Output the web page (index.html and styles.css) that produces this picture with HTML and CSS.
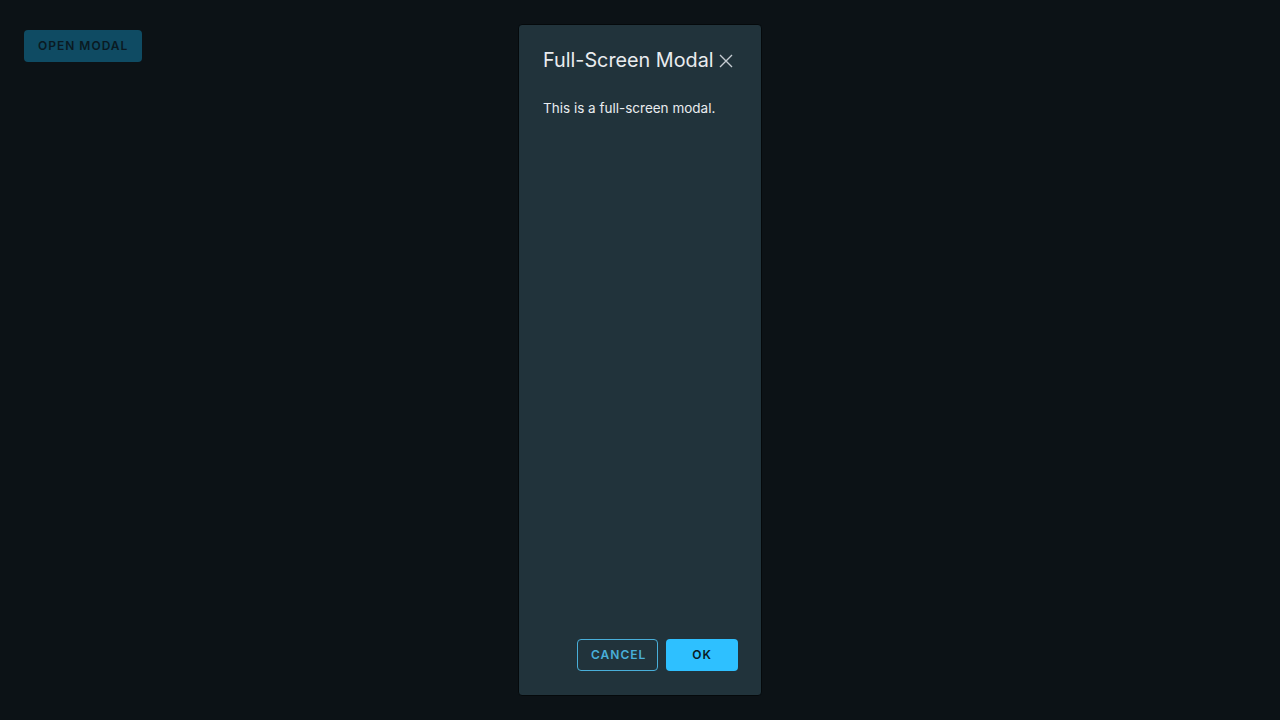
FILE: index.html
```html
<!DOCTYPE html>
<html lang="en">
<head>
<meta charset="utf-8">
<title>Full-Screen Modal</title>
<link rel="stylesheet" href="styles.css">
</head>
<body>
<main class="page">
  <button class="btn btn-open">Open Modal</button>
</main>
<div class="backdrop">
  <section class="modal" role="dialog" aria-labelledby="modal-title">
    <header class="modal-header">
      <h2 class="modal-title" id="modal-title">Full-Screen Modal</h2>
      <button class="modal-close" aria-label="Close">
        <svg viewBox="0 0 16 16" width="16" height="16"><path d="M2 2 L14 14 M14 2 L2 14" stroke="currentColor" stroke-width="1.4" fill="none"/></svg>
      </button>
    </header>
    <div class="modal-body">
      <p>This is a full-screen modal.</p>
    </div>
    <footer class="modal-footer">
      <button class="btn btn-outline">Cancel</button>
      <button class="btn btn-primary">OK</button>
    </footer>
  </section>
</div>
</body>
</html>
```
FILE: styles.css
```css
html, body {
  margin: 0;
  height: 100%;
}
body {
  background: #0c1216;
  font-family: Inter, "Noto Sans", "Liberation Sans", sans-serif;
  color: #e9ecef;
}
.page {
  padding: 30px 24px;
}
.btn {
  font-family: inherit;
  font-size: 12px;
  font-weight: 600;
  letter-spacing: 1px;
  text-transform: uppercase;
  height: 32px;
  padding: 0 13px;
  border-radius: 4px;
  border: 1px solid transparent;
  cursor: pointer;
  line-height: 30px;
}
.btn-open {
  background: #0f4b63;
  color: #0a1a22;
}
.backdrop {
  position: fixed;
  inset: 0;
  display: flex;
  align-items: center;
  justify-content: center;
}
.modal {
  box-sizing: border-box;
  width: 244px;
  height: 672px;
  background: #21333b;
  border: 1px solid #05090b;
  border-radius: 4px;
  padding: 23px 23px 24px 24px;
  display: flex;
  flex-direction: column;
}
.modal-header {
  display: flex;
  align-items: center;
  gap: 4px;
}
.modal-title {
  margin: 0;
  font-size: 19.8px;
  font-weight: 400;
  line-height: 24px;
  color: #e9ecef;
  white-space: nowrap;
}
.modal-close {
  background: none;
  border: 0;
  padding: 0;
  color: #c5ccd2;
  width: 16px;
  height: 16px;
  display: flex;
  margin-top: 2px;
}
.modal-body {
  flex: 1;
  padding-top: 24px;
}
.modal-body p {
  margin: 0;
  font-size: 13.5px;
  line-height: 24px;
  color: #e9ecef;
}
.modal-footer {
  display: flex;
  justify-content: flex-end;
  gap: 8px;
}
.btn-outline {
  background: transparent;
  border-color: #49afd9;
  color: #49afd9;
  width: 81px;
}
.btn-primary {
  background: #2ec0ff;
  color: #0a1a22;
  width: 72px;
}
```
